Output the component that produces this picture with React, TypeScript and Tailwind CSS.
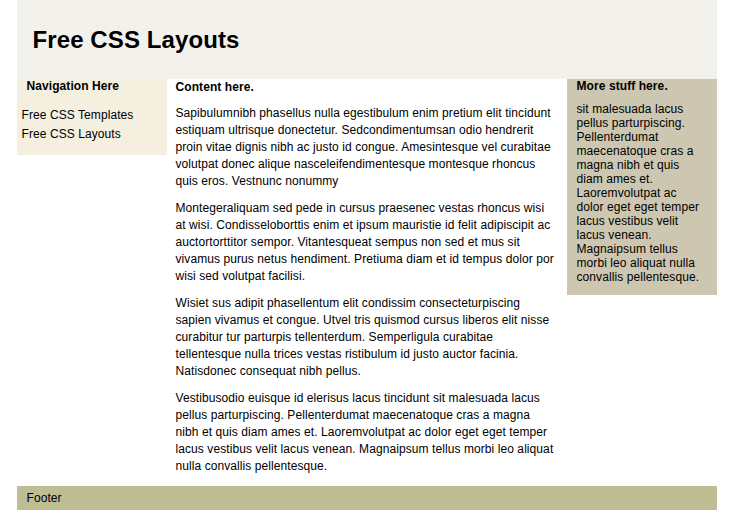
export default function App() {
  const paragraphs = [
    "Sapibulumnibh phasellus nulla egestibulum enim pretium elit tincidunt estiquam ultrisque donectetur. Sedcondimentumsan odio hendrerit proin vitae dignis nibh ac justo id congue. Amesintesque vel curabitae volutpat donec alique nasceleifendimentesque montesque rhoncus quis eros. Vestnunc nonummy",
    "Montegeraliquam sed pede in cursus praesenec vestas rhoncus wisi at wisi. Condisseloborttis enim et ipsum mauristie id felit adipiscipit ac auctortorttitor sempor. Vitantesqueat sempus non sed et mus sit vivamus purus netus hendiment. Pretiuma diam et id tempus dolor por wisi sed volutpat facilisi.",
    "Wisiet sus adipit phasellentum elit condissim consecteturpiscing sapien vivamus et congue. Utvel tris quismod cursus liberos elit nisse curabitur tur parturpis tellenterdum. Semperligula curabitae tellentesque nulla trices vestas ristibulum id justo auctor facinia. Natisdonec consequat nibh pellus.",
    "Vestibusodio euisque id elerisus lacus tincidunt sit malesuada lacus pellus parturpiscing. Pellenterdumat maecenatoque cras a magna nibh et quis diam ames et. Laoremvolutpat ac dolor eget eget temper lacus vestibus velit lacus venean. Magnaipsum tellus morbi leo aliquat nulla convallis pellentesque.",
  ];

  return (
    <div className="min-h-screen bg-white font-['Liberation_Sans',Arial,sans-serif] text-[12px] tracking-[0.08px] text-black">
      <div className="mx-auto w-[700px]">
        {/* Header */}
        <div className="flex h-[79px] items-center bg-[#f3f1ec] pl-[16px]">
          <h1 className="text-[24px] font-bold leading-none tracking-[0.1px]">Free CSS Layouts</h1>
        </div>

        <div className="flex items-start">
          {/* Navigation */}
          <div className="w-[150px] bg-[#f5efe0] pb-[11px]">
            <h3 className="px-[10px] font-bold leading-[14px]">Navigation Here</h3>
            <ul className="mt-[13px] pl-[5px] leading-[19px]">
              <li>Free CSS Templates</li>
              <li>Free CSS Layouts</li>
            </ul>
          </div>

          {/* Content */}
          <div className="w-[400px] pl-[9px] pr-[11px] pt-[1px] pb-[1px]">
            <h3 className="mb-[10px] font-bold leading-[15px]">Content here.</h3>
            {paragraphs.map((p, i) => (
              <p key={i} className="mb-[10px] leading-[17px]">
                {p}
              </p>
            ))}
          </div>

          {/* Sidebar */}
          <div className="w-[150px] bg-[#cdc7b1] px-[10px] pb-[11px]">
            <h3 className="mb-[9px] font-bold leading-[14px]">More stuff here.</h3>
            <p className="leading-[14px]">
              sit malesuada lacus pellus parturpiscing. Pellenterdumat maecenatoque cras a magna nibh et quis
              diam ames et. Laoremvolutpat ac dolor eget eget temper lacus vestibus velit lacus venean.
              Magnaipsum tellus morbi leo aliquat nulla convallis pellentesque.
            </p>
          </div>
        </div>

        {/* Footer */}
        <div className="h-[24px] bg-[#bfbd94] px-[10px] leading-[24px]">Footer</div>
      </div>
    </div>
  );
}
